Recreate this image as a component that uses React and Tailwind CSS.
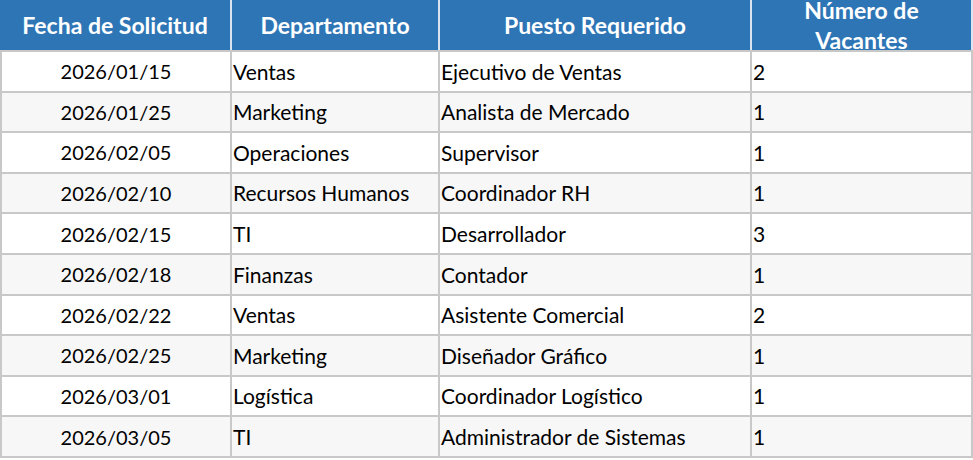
const rows = [
  ['2026/01/15', 'Ventas', 'Ejecutivo de Ventas', '2'],
  ['2026/01/25', 'Marketing', 'Analista de Mercado', '1'],
  ['2026/02/05', 'Operaciones', 'Supervisor', '1'],
  ['2026/02/10', 'Recursos Humanos', 'Coordinador RH', '1'],
  ['2026/02/15', 'TI', 'Desarrollador', '3'],
  ['2026/02/18', 'Finanzas', 'Contador', '1'],
  ['2026/02/22', 'Ventas', 'Asistente Comercial', '2'],
  ['2026/02/25', 'Marketing', 'Diseñador Gráfico', '1'],
  ['2026/03/01', 'Logística', 'Coordinador Logístico', '1'],
  ['2026/03/05', 'TI', 'Administrador de Sistemas', '1'],
];

const App = () => {
  return (
    <div className="w-[973px] bg-white text-[21px] text-black" style={{ fontFamily: 'Lato, "Open Sans", sans-serif' }}>
      {/* header */}
      <div className="flex h-[52px] bg-[#2e75b6] text-white text-[23px] font-bold border-b-2 border-[#c8c8c8]">
        <div className="w-[232px] flex items-center justify-center border-r-2 border-[#d9e4f0]">Fecha de Solicitud</div>
        <div className="w-[208px] flex items-center justify-center border-r-2 border-[#d9e4f0]">Departamento</div>
        <div className="w-[312px] flex items-center justify-center border-r-2 border-[#d9e4f0]">Puesto Requerido</div>
        <div className="flex-1 flex items-center justify-center overflow-hidden text-center leading-[30px] border-r-2 border-[#d9e4f0]">
          Número de<br />Vacantes
        </div>
      </div>
      {/* body */}
      {rows.map((r, i) => (
        <div
          key={i}
          className={`flex h-[40.6px] border-b-2 border-l-2 border-r-2 border-[#c8c8c8] ${i % 2 === 1 ? 'bg-[#f7f7f7]' : 'bg-white'}`}
        >
          <div className="w-[230px] flex items-center justify-center text-[20px] border-r-2 border-[#c8c8c8]">{r[0]}</div>
          <div className="w-[208px] flex items-center pl-[1px] border-r-2 border-[#c8c8c8]">{r[1]}</div>
          <div className="w-[312px] flex items-center pl-[1px] border-r-2 border-[#c8c8c8]">{r[2]}</div>
          <div className="flex-1 flex items-center pl-[1px]">{r[3]}</div>
        </div>
      ))}
    </div>
  );
};

export default App;
